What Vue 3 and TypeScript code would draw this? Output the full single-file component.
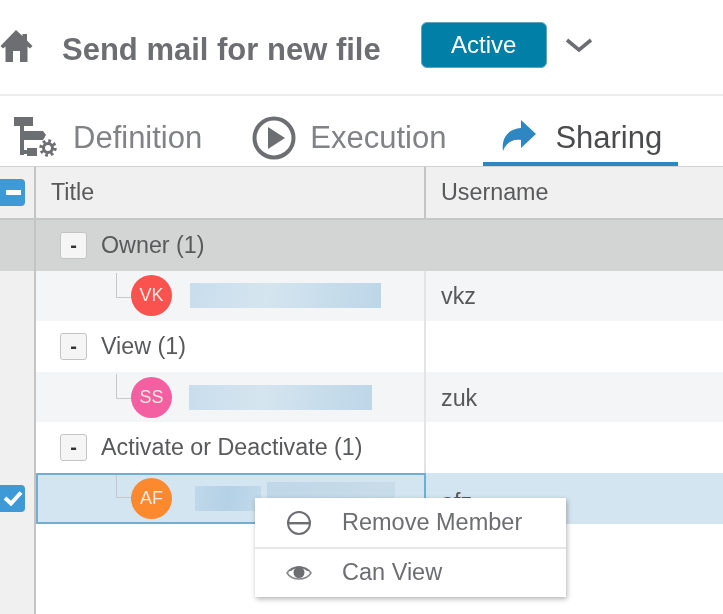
<script setup lang="ts">
interface Row {
  kind: 'group' | 'leaf'
  label?: string
  initials?: string
  color?: string
  username?: string
  redactWidth?: number
  redactLeft?: number
  selected?: boolean
  owner?: boolean
}
const rows: Row[] = [
  { kind: 'group', label: 'Owner (1)', owner: true },
  { kind: 'leaf', initials: 'VK', color: '#f9524f', username: 'vkz', redactWidth: 191, redactLeft: 18 },
  { kind: 'group', label: 'View (1)' },
  { kind: 'leaf', initials: 'SS', color: '#f45fa1', username: 'zuk', redactWidth: 183, redactLeft: 17 },
  { kind: 'group', label: 'Activate or Deactivate (1)' },
  { kind: 'leaf', initials: 'AF', color: '#fd892f', username: 'afz', redactWidth: 66, redactLeft: 23, selected: true },
]
</script>

<template>
  <div class="page">
    <header class="top">
      <svg class="home" viewBox="0 -2 34 34" width="34" height="34">
        <path d="M16 0 L22.5 6 V4 H27 V10.5 L32.5 16 L30 18.5 L27.5 16.5 V32 H20 V21 H13 V32 H5.5 V16.5 L3 18.5 L0.5 16 Z" fill="#6d6e71" />
      </svg>
      <h1 class="title">Send mail for new file</h1>
      <button class="status">Active</button>
      <svg class="chev" viewBox="0 0 28 16" width="28" height="16">
        <path d="M2 2 L14 12 L26 2" fill="none" stroke="#6d6e71" stroke-width="3.6" />
      </svg>
    </header>

    <nav class="tabs">
      <div class="tab tab-def">
        <svg viewBox="0 0 44 42" width="44" height="42">
          <g fill="#6d6e71">
            <rect x="0" y="0" width="19" height="9" />
            <rect x="6" y="9" width="4" height="29" />
            <path d="M10 14 H29 L32 18 L29 23 H10 Z" />
            <rect x="10" y="33" width="4" height="4" />
            <rect x="13" y="31" width="10" height="8" />
          </g>
          <g fill="none" stroke="#6d6e71">
            <circle cx="34" cy="31" r="4.5" stroke-width="3" />
            <circle cx="34" cy="31" r="7" stroke-width="3.4" stroke-dasharray="2.7 2.8" />
          </g>
        </svg>
        <span>Definition</span>
      </div>
      <div class="tab tab-exec">
        <svg viewBox="0 0 44 44" width="44" height="44">
          <circle cx="22" cy="22" r="19.5" fill="none" stroke="#6d6e71" stroke-width="4" />
          <path d="M16 11 L33 22 L16 33 Z" fill="#6d6e71" />
        </svg>
        <span>Execution</span>
      </div>
      <div class="tab tab-share">
        <svg viewBox="0 0 34 32" width="34" height="32">
          <path d="M19 0 L34 14 L19 28 V20 C10 19 4 23 1 31 C-1 17 7 9 19 8 Z" fill="#2e87c0" />
        </svg>
        <span>Sharing</span>
      </div>
    </nav>

    <div class="grid">
      <div class="hrow">
        <div class="c-check">
          <span class="box"><span class="dash"></span></span>
        </div>
        <div class="c-title">Title</div>
        <div class="c-user">Username</div>
      </div>

      <div
        v-for="(row, i) in rows"
        :key="i"
        class="row"
        :class="[row.kind, { owner: row.owner, selected: row.selected }]"
      >
        <div class="c-check">
          <span v-if="row.selected" class="box">
            <svg viewBox="0 0 20 16" width="20" height="16">
              <path d="M2 8 L8 13.5 L18 2.5" fill="none" stroke="#fff" stroke-width="4" />
            </svg>
          </span>
        </div>
        <div class="c-title">
          <template v-if="row.kind === 'group'">
            <span class="toggle">-</span>
            <span class="label">{{ row.label }}</span>
          </template>
          <template v-else>
            <span class="connector"></span>
            <span class="avatar" :style="{ background: row.color }">{{ row.initials }}</span>
            <span
              class="redact"
              :style="{ width: row.redactWidth + 'px', marginLeft: row.redactLeft + 'px' }"
            ></span>
            <span v-if="row.selected" class="redact redact-2"></span>
          </template>
        </div>
        <div class="c-user"><span class="uname">{{ row.username }}</span></div>
      </div>
      <div class="rest">
        <div class="c-check"></div>
      </div>
    </div>

    <ul class="menu">
      <li>
        <svg viewBox="0 0 26 26" width="26" height="26">
          <circle cx="13" cy="13" r="11" fill="none" stroke="#6d6e71" stroke-width="2" />
          <rect x="3" y="12" width="20" height="2.4" fill="#6d6e71" />
        </svg>
        <span>Remove Member</span>
      </li>
      <li>
        <svg viewBox="0 0 26 18" width="26" height="18">
          <path d="M1 9 C6 1 20 1 25 9 C20 17 6 17 1 9 Z" fill="none" stroke="#8a8b8e" stroke-width="1.6" />
          <path d="M3 7 C8 0.5 18 0.5 23 7 L21 7 C17 3 9 3 5 7 Z" fill="#6d6e71" />
          <circle cx="13" cy="8.5" r="5.5" fill="#6d6e71" />
        </svg>
        <span>Can View</span>
      </li>
    </ul>
  </div>
</template>

<style>
html, body { margin: 0; background: #fff; }
</style>

<style scoped>
.page {
  position: relative;
  width: 723px;
  height: 614px;
  overflow: hidden;
  font-family: "Liberation Sans", Arial, sans-serif;
  color: #58595b;
  background: #fff;
  display: flex;
  flex-direction: column;
  filter: blur(0.4px);
}
.top {
  height: 94px;
  box-sizing: content-box;
  border-bottom: 2px solid #ececec;
  display: flex;
  align-items: center;
  flex: none;
}
.home { margin-bottom: 4px; flex: none; }
.title {
  margin: 5px 0 0 28px;
  font-size: 31px;
  font-weight: 700;
  color: #6d6e71;
  white-space: nowrap;
}
.status {
  margin: 0 0 4px 40px;
  width: 126px;
  height: 46px;
  border: 1px solid #5fa3bd;
  border-radius: 6px;
  background: #017fa7;
  color: #fff;
  font: 24px "Liberation Sans", Arial, sans-serif;
  padding: 0;
}
.chev { margin: 0 0 3px 18px; flex: none; }

.tabs {
  height: 70px;
  display: flex;
  align-items: flex-start;
  flex: none;
  font-size: 31px;
  color: #808285;
  position: relative;
}
.tab { display: flex; align-items: center; height: 70px; box-sizing: border-box; padding-top: 14px; position: relative; }
.tab-def { margin-left: 14px; }
.tab-def span { margin-left: 15px; }
.tab-exec { margin-left: 50px; }
.tab-exec span { margin-left: 14px; }
.tab-share { margin-left: 37px; color: #4a4b4d; width: 195px; padding-left: 19px; }
.tab-share svg { margin-top: -4px; }
.tab-share span { margin-left: 19px; }
.tab-share::after {
  content: "";
  position: absolute;
  left: 0;
  right: 0;
  bottom: 0;
  height: 4px;
  background: #2e87c0;
}

.grid { flex: 1; display: flex; flex-direction: column; border-top: 1px solid #d2d2d2; }
.hrow, .row, .rest { display: grid; grid-template-columns: 36px 390px 1fr; flex: none; }
.hrow { height: 53px; box-sizing: border-box; background: #f0f0f0; border-bottom: 2px solid #c6c6c6; font-size: 23.3px; }
.row { height: 50.6px; font-size: 23.3px; }
.rest { flex: 1; }
.c-check {
  background: #f0f0f0;
  border-right: 2px solid #c4c4c4;
  box-sizing: border-box;
  display: flex;
  align-items: center;
  position: relative;
}
.c-title { display: flex; align-items: center; padding-left: 15px; box-sizing: border-box; border-right: 2px solid #e4e4e4; position: relative; }
.c-user { display: flex; align-items: center; padding-left: 15px; }
.hrow .c-title { border-right-color: #c4c4c4; }
.uname { position: relative; top: 1px; }
.selected .uname { top: 4px; }

.box {
  position: absolute;
  left: -5px;
  width: 30px;
  height: 27px;
  border-radius: 4px;
  background: #3e9ad6;
  display: flex;
  align-items: center;
  justify-content: center;
}
.dash { width: 15px; height: 5px; background: #fff; margin-left: 6px; }
.box svg { margin-left: 6px; }

.group { background: #fff; }
.group.owner, .group.owner .c-check { background: #d3d5d4; }
.group.owner .c-title { border-right-color: #d3d5d4; }
.group .c-title { padding-left: 24px; }
.toggle {
  width: 27px;
  height: 27px;
  box-sizing: border-box;
  border: 1px solid #c4c4c4;
  border-radius: 3px;
  background: #f5f5f5;
  color: #333;
  font-size: 20px;
  font-weight: 700;
  display: flex;
  align-items: center;
  justify-content: center;
  flex: none;
}
.label { margin-left: 14px; white-space: nowrap; }

.leaf { background: #f3f5f6; }
.leaf .c-title { padding-left: 95px; }
.connector {
  position: absolute;
  left: 80px;
  top: 2px;
  width: 15px;
  height: 24px;
  border-left: 1px solid #c8c8c8;
  border-bottom: 1px solid #c8c8c8;
}
.avatar {
  width: 41px;
  height: 41px;
  border-radius: 50%;
  color: #fbe9e4;
  font-size: 18px;
  font-weight: 400;
  display: flex;
  align-items: center;
  justify-content: center;
  flex: none;
  position: relative;
}
.redact {
  height: 25px;
  flex: none;
  background: linear-gradient(100deg, #c8dded, #d5e5ef 40%, #c6dceb 75%, #bdd6e8);
}

.selected, .selected .c-user { background: #d3e5f0; }
.selected .c-check { background: #f0f0f0; }
.selected .c-title { border: 2px solid #74add2; background: #d3e5f0; padding-left: 93px; }
.selected .connector { left: 78px; top: 0; height: 22px; }
.selected .redact { background: linear-gradient(100deg, #c0d8ea, #b4d1e6 50%, #c3daea); }
.selected .redact-2 {
  width: 128px;
  position: relative;
  top: -4px;
  margin-left: 6px;
  background: linear-gradient(100deg, #bfd7e8, #c9dce9);
}

.menu {
  position: absolute;
  left: 255px;
  top: 498px;
  width: 311px;
  height: 99px;
  margin: 0;
  padding: 0;
  list-style: none;
  background: #fff;
  box-shadow: 1px 2px 5px rgba(0, 0, 0, 0.3);
  font-size: 23.5px;
  color: #6d6e71;
}
.menu li { height: 49px; box-sizing: border-box; padding-bottom: 1px; display: flex; align-items: center; position: relative; padding-left: 87px; }
.menu li + li { height: 50px; border-top: 2px solid #e6e6e6; padding-bottom: 2px; }
.menu svg { position: absolute; left: 31px; top: 50%; transform: translateY(-50%); }
</style>
